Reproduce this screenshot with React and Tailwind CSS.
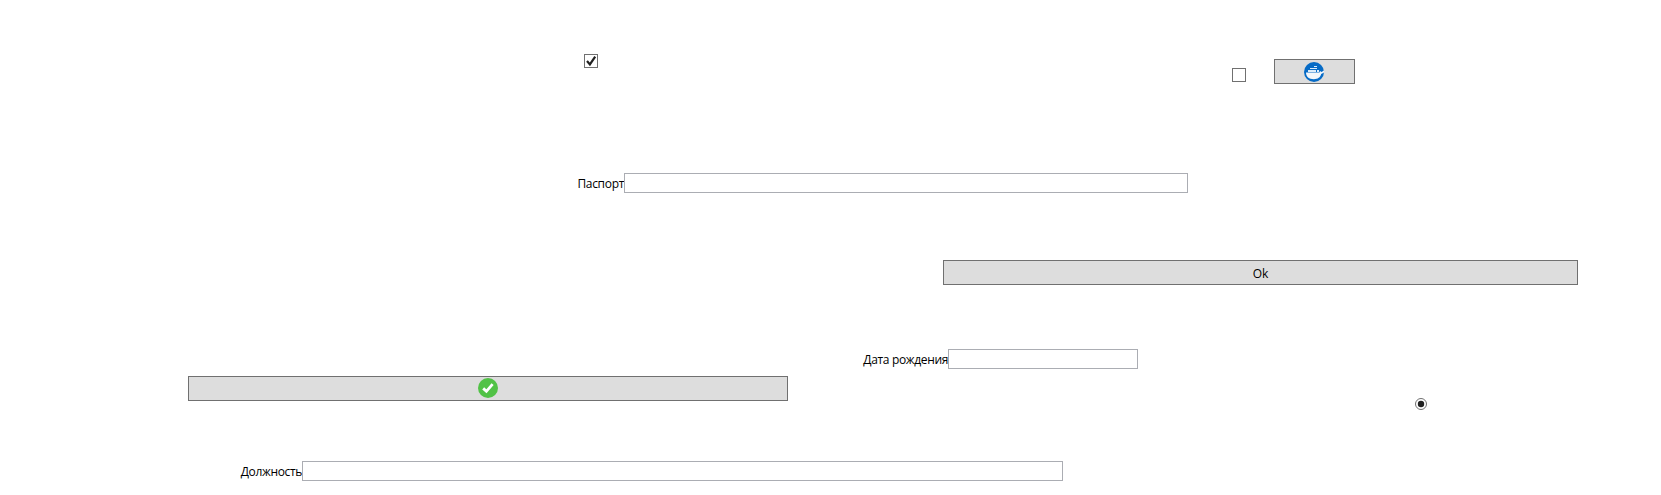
function Field({ label, labelClass, inputClass, className }) {
  return (
    <label className={`flex h-5 ${className}`}>
      <span className={`flex shrink-0 justify-end whitespace-nowrap pt-[3px] text-[12px] leading-4 ${labelClass}`}>{label}</span>
      <input type="text" className={`h-5 shrink-0 border border-[#abadb3] bg-white px-1 text-[12px] outline-none ${inputClass}`} />
    </label>
  );
}

function Checkbox({ checked, className }) {
  return (
    <span role="checkbox" aria-checked={checked} className={`flex size-3.5 shrink-0 border border-[#707070] bg-white ${className}`}>
      {checked && (
        <svg viewBox="0 0 12 12" className="size-3">
          <path d="M2 6 4.9 9.4 10.2 1.6" fill="none" stroke="#212121" strokeWidth="2.2" />
        </svg>
      )}
    </span>
  );
}

function Button({ children, className }) {
  return (
    <button className={`flex h-[25px] shrink-0 justify-center border border-[#707070] bg-[#dddddd] text-[12px] leading-4 ${className}`}>
      {children}
    </button>
  );
}

function WhaleIcon() {
  return (
    <svg viewBox="0 0 20 20" className="mt-0.5 -ml-px size-5">
      <circle cx="10" cy="10" r="10" fill="#066bc6" />
      <path d="M2 10.5H15.5L16 9 17.5 10 20 8.5V10.5L17.2 12C16.2 15.4 14 17.2 9.8 17.2 5 17.2 2 14.8 2 10.5Z" fill="#f2f6fa" />
      <path d="M4 8H15V10H4ZM6 6H13V7H6ZM10 4H13V5H10Z" fill="#dcecfa" />
      <path d="M12.5 8V10" stroke="#066bc6" strokeWidth="1" />
    </svg>
  );
}

function SuccessIcon() {
  return (
    <svg viewBox="0 0 20 20" className="mt-px size-5">
      <circle cx="10" cy="10" r="10" fill="#51c246" />
      <path d="M5.2 10.4 8.4 13.3 14.6 6.2" fill="none" stroke="#fff" strokeWidth="2.8" />
    </svg>
  );
}

export default function App() {
  return (
    <main className="flex h-[495px] w-[1661px] flex-col overflow-hidden bg-white pt-[54px] font-['Open_Sans','Noto_Sans',sans-serif] text-black">
      <div className="flex h-[30px] items-start">
        <Checkbox checked className="ml-[584px]" />
        <Checkbox checked={false} className="mt-3.5 ml-[634px]" />
        <Button className="mt-[5px] ml-7 w-[81px]"><WhaleIcon /></Button>
      </div>
      <Field label="Паспорт" className="mt-[89px] ml-[564px]" labelClass="w-[60px] tracking-[-0.32px]" inputClass="w-[564px]" />
      <Button className="mt-[67px] ml-[943px] w-[635px] pt-[5px]">Ok</Button>
      <div className="mt-16 flex h-[61px] items-start">
        <Button className="mt-[27px] ml-[188px] w-[600px]"><SuccessIcon /></Button>
        <Field label="Дата рождения" className="ml-[60px]" labelClass="w-[100px] tracking-[-0.35px]" inputClass="w-[190px]" />
        <svg role="radio" aria-checked="true" viewBox="0 0 12 12" className="mt-[49px] ml-[277px] size-3">
          <circle cx="6" cy="6" r="5.5" fill="#fff" stroke="#707070" />
          <circle cx="6" cy="6" r="3.2" fill="#212121" />
        </svg>
      </div>
      <Field label="Должность" className="mt-[51px] ml-[222px]" labelClass="w-[80px] tracking-[-0.35px]" inputClass="w-[761px]" />
    </main>
  );
}
